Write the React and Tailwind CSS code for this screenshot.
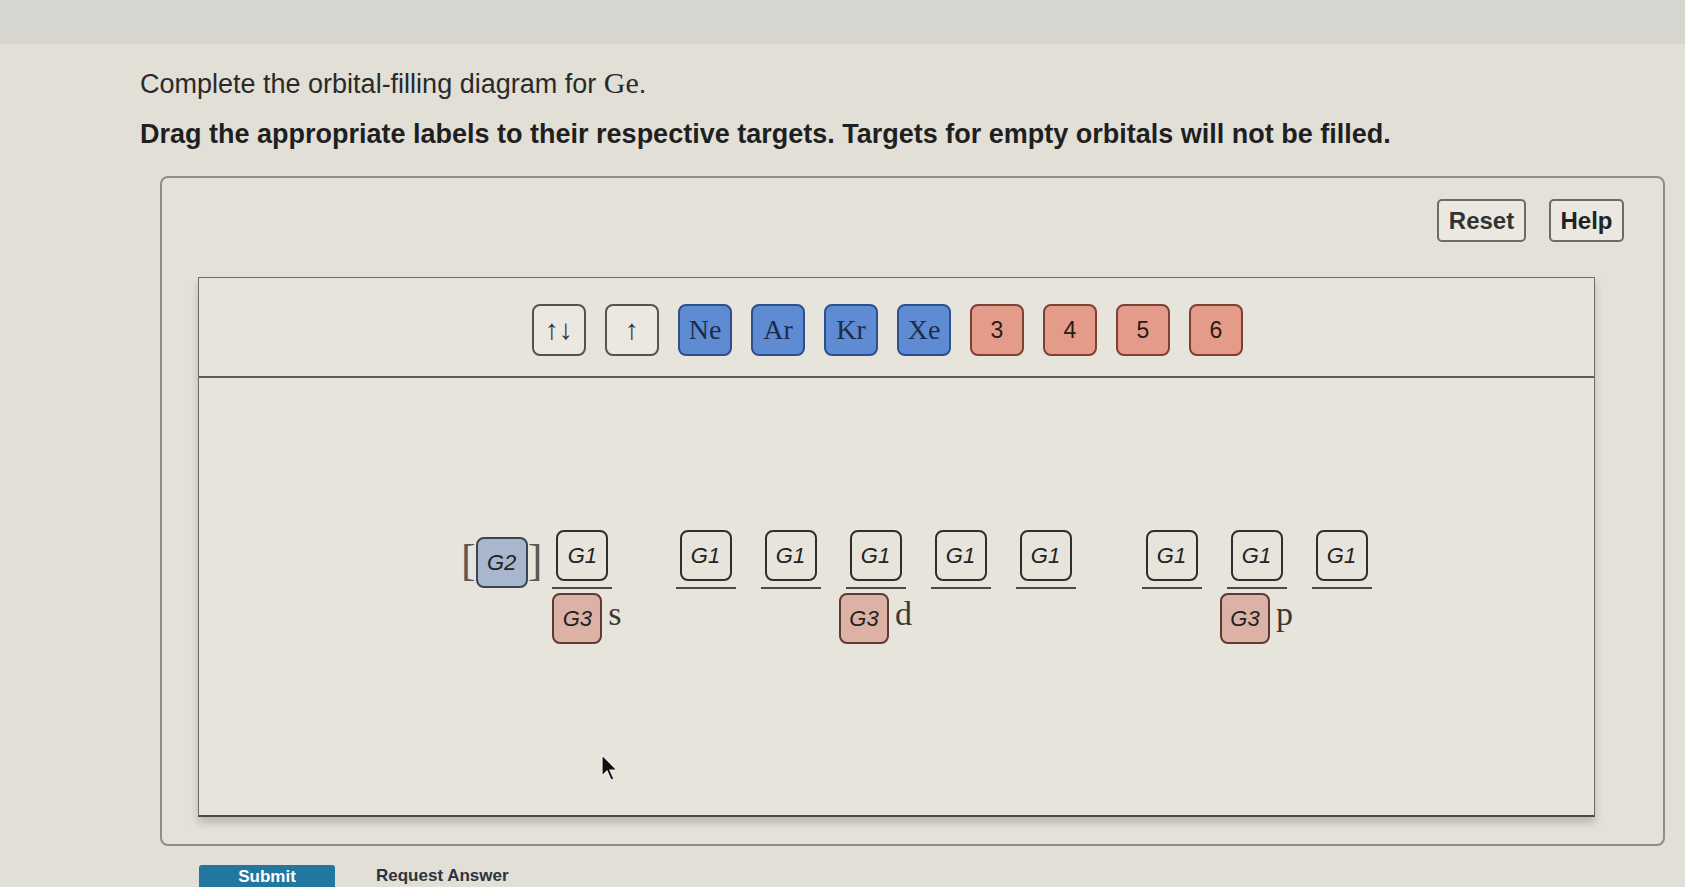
import React from 'react';

const sans = { fontFamily: '"Liberation Sans", Arial, sans-serif' };
const serif = { fontFamily: '"Liberation Serif", "Times New Roman", serif' };

const trayLabels = [
  { t: '↑↓', kind: 'plain' },
  { t: '↑', kind: 'plain' },
  { t: 'Ne', kind: 'blue' },
  { t: 'Ar', kind: 'blue' },
  { t: 'Kr', kind: 'blue' },
  { t: 'Xe', kind: 'blue' },
  { t: '3', kind: 'red' },
  { t: '4', kind: 'red' },
  { t: '5', kind: 'red' },
  { t: '6', kind: 'red' },
];

const TrayTile = ({ t, kind }) => {
  if (kind === 'blue') {
    return (
      <div
        className="w-[54px] h-[52px] rounded-lg border-2 border-[#2d4f8c] bg-[#5f8bd3] flex items-center justify-center text-[28px] text-[#1c2c4a]"
        style={serif}
      >
        {t}
      </div>
    );
  }
  if (kind === 'red') {
    return (
      <div
        className="w-[54px] h-[52px] rounded-lg border-2 border-[#7d4037] bg-[#e59b89] flex items-center justify-center text-[23px] text-[#2a1a18]"
        style={sans}
      >
        {t}
      </div>
    );
  }
  return (
    <div
      className="w-[54px] h-[52px] rounded-lg border-2 border-[#55534f] bg-[#ebe8e1] flex items-center justify-center text-[28px] text-[#333]"
      style={sans}
    >
      {t}
    </div>
  );
};

const G1 = () => (
  <div
    className="w-[52px] h-[51px] rounded-lg border-2 border-[#2f2e2b] flex items-center justify-center text-[22px] italic text-[#222]"
    style={sans}
  >
    G1
  </div>
);

const G3 = () => (
  <div
    className="w-[50px] h-[51px] rounded-lg border-2 border-[#5e3a33] bg-[#ddb2a6] flex items-center justify-center text-[22px] italic text-[#222]"
    style={sans}
  >
    G3
  </div>
);

const Slot = () => (
  <div className="w-[60px] flex flex-col items-center">
    <G1 />
    <div className="mt-[6px] w-[60px] h-[2px] bg-[#4a4946]" />
  </div>
);

const Subshell = ({ count, letter }) => (
  <div className="flex flex-col">
    <div className="flex gap-[25px]">
      {Array.from({ length: count }).map((_, i) => (
        <Slot key={i} />
      ))}
    </div>
    <div className="mt-[4px] flex justify-center items-start">
      <G3 />
      <span className="ml-[6px] mt-[4px] text-[34px] leading-none text-[#3a3936]" style={serif}>
        {letter}
      </span>
    </div>
  </div>
);

export default function App() {
  return (
    <div className="w-[1685px] h-[887px] overflow-hidden bg-[#e2dfd7] text-[#222]" style={sans}>
      <div className="h-[44px] bg-[#d7d5cf]" />

      <div className="pl-[140px] mt-[23px]">
        <p className="text-[27px] leading-[32px] text-[#2a2a2a]">
          Complete the orbital-filling diagram for <span className="text-[30px]" style={serif}>Ge</span>.
        </p>
        <p className="mt-[18px] text-[27px] leading-[32px] font-bold text-[#1f1f1f]">
          Drag the appropriate labels to their respective targets. Targets for empty orbitals will not be filled.
        </p>
      </div>

      {/* outer panel */}
      <div className="ml-[160px] mt-[26px] w-[1505px] h-[670px] rounded-lg border-2 border-[#8f8d87] bg-[#e4e1d9] pt-[21px] pl-[36px] pr-[39px]">
        <div className="flex justify-end gap-[23px]">
          <button className="w-[89px] h-[43px] rounded-[5px] border-2 border-[#6d6b66] bg-[#ebe8e1] text-[24px] font-bold text-[#333]">
            Reset
          </button>
          <button className="w-[75px] h-[43px] rounded-[5px] border-2 border-[#6d6b66] bg-[#ebe8e1] text-[24px] font-bold text-[#222]">
            Help
          </button>
        </div>

        {/* inner panel */}
        <div className="mt-[35px] w-[1397px] h-[540px] border border-[#6e6c67] border-b-2 border-b-[#4a4946] bg-[#e7e4dc] shadow-[0_6px_8px_rgba(0,0,0,0.18)]">
          <div className="h-[100px] border-b-2 border-[#5c5a55] flex items-center justify-center gap-[19px] pr-[18px] pt-[6px]">
            {trayLabels.map((l) => (
              <TrayTile key={l.t} t={l.t} kind={l.kind} />
            ))}
          </div>

          <div className="relative pt-[152px] pl-[262px] flex items-start">
            <div className="flex items-center mt-[7px] text-[#5a5955]">
              <span className="text-[44px] leading-none -mt-[4px]" style={serif}>[</span>
              <div
                className="w-[52px] h-[51px] rounded-lg border-2 border-[#3a4452] bg-[#a8b7cd] flex items-center justify-center text-[22px] italic text-[#222]"
                style={sans}
              >
                G2
              </div>
              <span className="text-[44px] leading-none -mt-[4px]" style={serif}>]</span>
            </div>

            <div className="ml-[10px]">
              <Subshell count={1} letter="s" />
            </div>
            <div className="ml-[54px]">
              <Subshell count={5} letter="d" />
            </div>
            <div className="ml-[66px]">
              <Subshell count={3} letter="p" />
            </div>

            {/* mouse pointer */}
            <svg className="absolute left-[401px] top-[376px]" width="20" height="28" viewBox="0 0 20 28">
              <path d="M2 1 L2 22 L7 17 L11 26 L14 25 L10 16 L17 16 Z" fill="#111" stroke="#eee" strokeWidth="1.2" />
            </svg>
          </div>
        </div>
      </div>

      <div className="ml-[199px] mt-[19px] flex items-start">
        <button className="w-[136px] h-[24px] rounded-t-[3px] bg-[#2277a0] text-white text-[17px] leading-[22px] font-bold">
          Submit
        </button>
        <span className="ml-[41px] text-[17px] leading-[22px] font-bold text-[#2c3440]">Request Answer</span>
      </div>
    </div>
  );
}
